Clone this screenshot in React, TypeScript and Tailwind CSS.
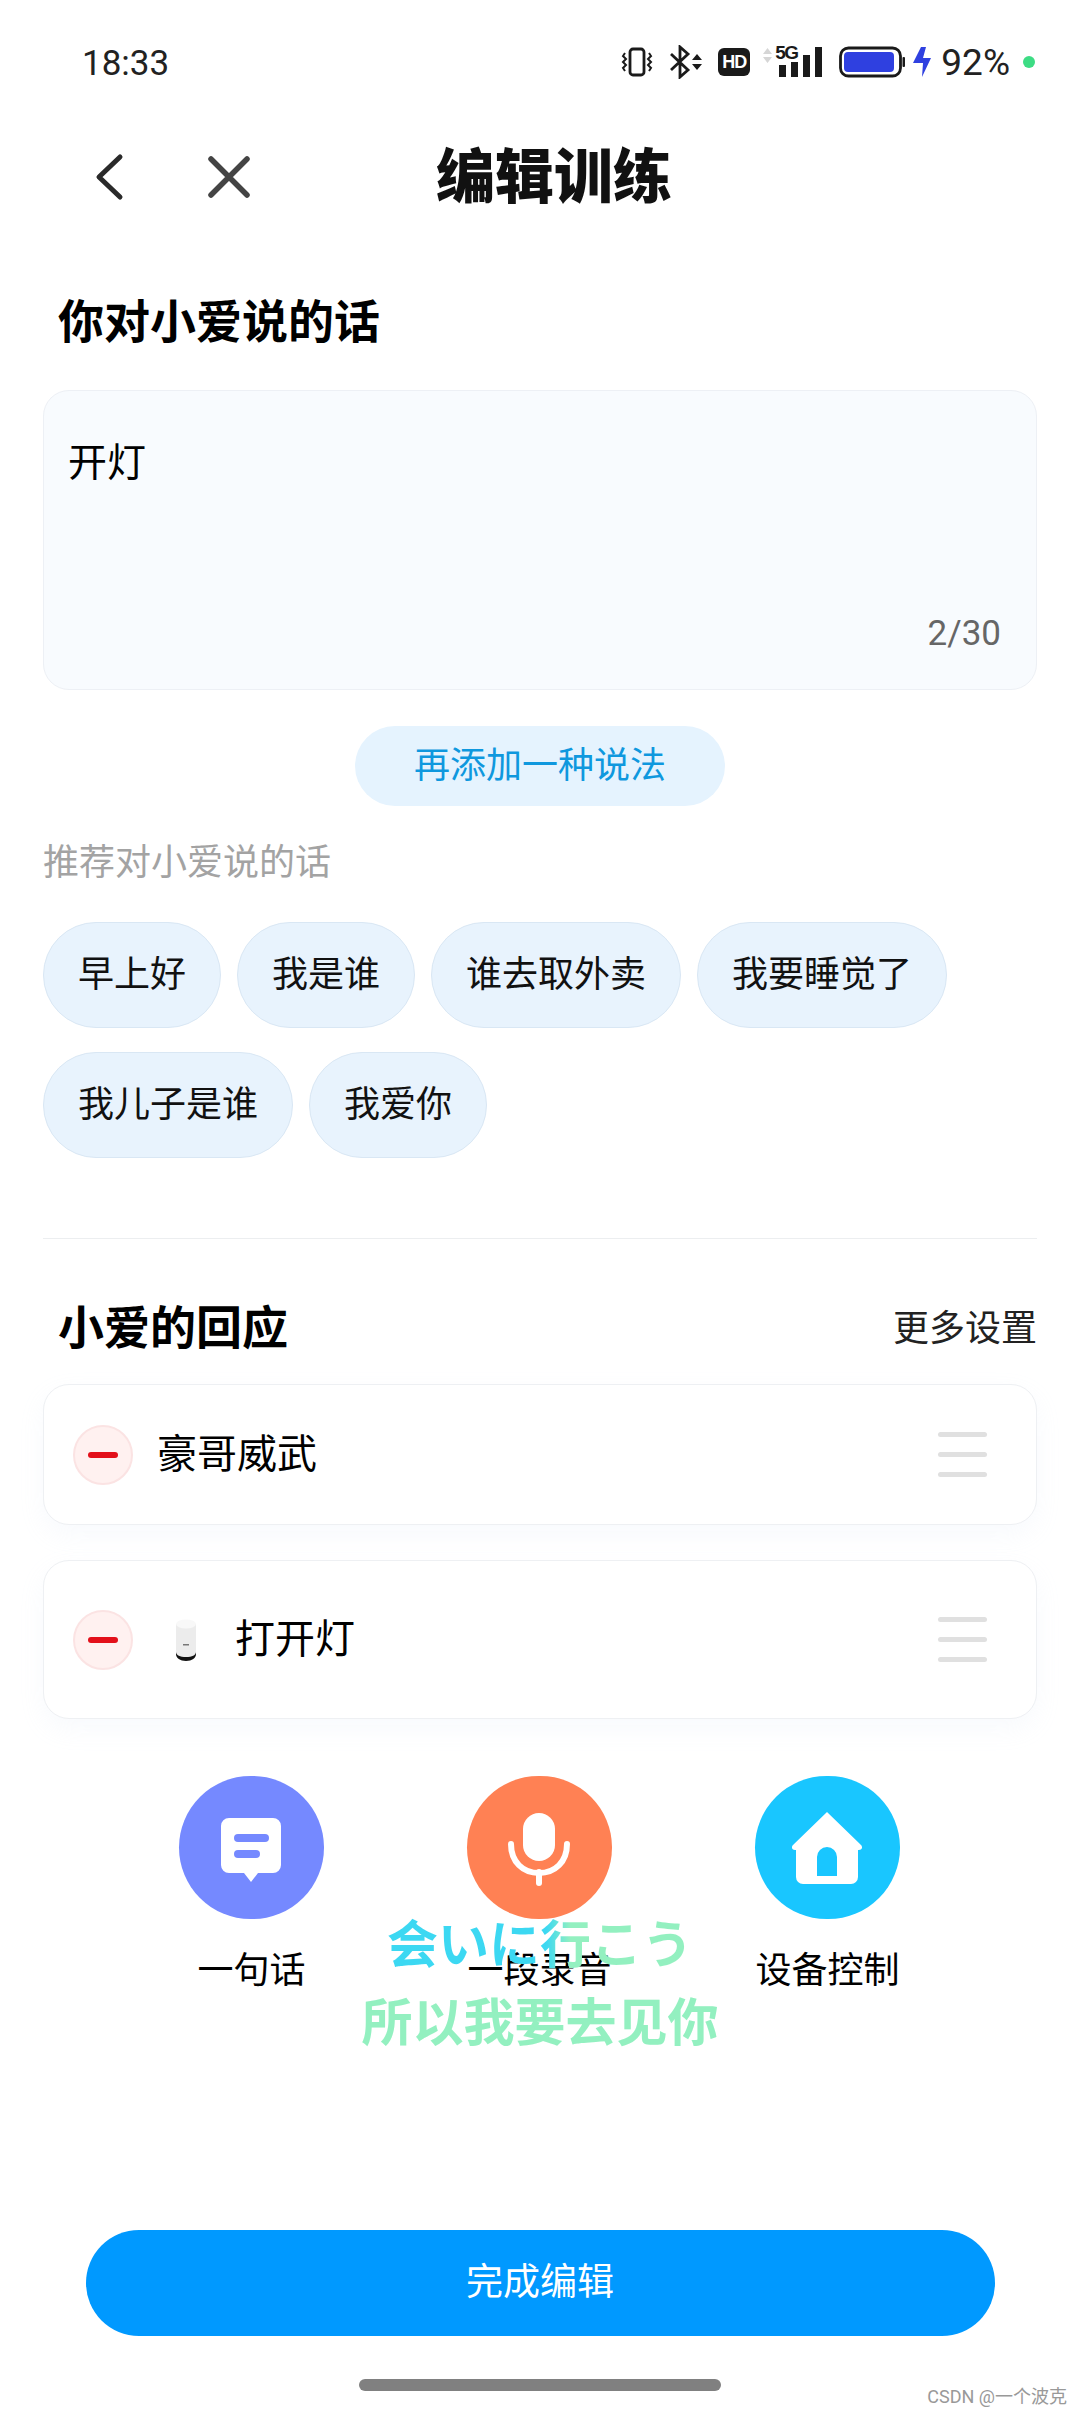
const chips = [
  ['早上好', '我是谁', '谁去取外卖', '我要睡觉了'],
  ['我儿子是谁', '我爱你'],
];

function RemoveButton() {
  return (
    <div className="flex h-[60px] w-[60px] shrink-0 items-center justify-center rounded-full border-2 border-[#fbe3e3] bg-[#fff1f0]">
      <div className="h-[6px] w-[30px] rounded-full bg-[#e3101a]" />
    </div>
  );
}

function DragHandle() {
  return (
    <div className="ml-auto flex w-[49px] flex-col gap-[15px]">
      <div className="h-[5px] rounded-full bg-[#e0e0e0]" />
      <div className="h-[5px] rounded-full bg-[#e0e0e0]" />
      <div className="h-[5px] rounded-full bg-[#e0e0e0]" />
    </div>
  );
}

function SpeakerIcon() {
  return (
    <svg width="22" height="42" viewBox="0 0 22 42" className="ml-[42px] shrink-0">
      <path d="M1 30v5c0 4 4 7 10 7s10-3 10-7v-5z" fill="#111" />
      <path d="M1 5v28c0 3 4 5 10 5s10-2 10-5V5z" fill="#ececec" />
      <ellipse cx="11" cy="5" rx="10" ry="4.5" fill="#f8f8f8" />
      <rect x="8" y="25" width="6" height="1.5" fill="#777" />
    </svg>
  );
}

function ChatIcon() {
  return (
    <svg width="145" height="143" viewBox="0 0 145 143">
      <path d="M50 42h44a8 8 0 0 1 8 8v39a8 8 0 0 1-8 8H79l-7 9-7-9H50a8 8 0 0 1-8-8V50a8 8 0 0 1 8-8z" fill="#fff" />
      <rect x="55" y="58" width="35" height="8" rx="4" fill="#7589ff" />
      <rect x="55" y="74" width="26" height="8" rx="4" fill="#7589ff" />
    </svg>
  );
}

function MicIcon() {
  return (
    <svg width="145" height="143" viewBox="0 0 145 143">
      <rect x="56" y="37" width="32" height="48" rx="16" fill="#fff" />
      <path d="M44 68c0 18 12 29 28 29s28-11 28-29" fill="none" stroke="#fff" strokeWidth="6" strokeLinecap="round" />
      <path d="M72 96v11" stroke="#fff" strokeWidth="6" strokeLinecap="round" />
    </svg>
  );
}

function HomeIcon() {
  return (
    <svg width="145" height="143" viewBox="0 0 145 143">
      <path
        fillRule="evenodd"
        d="M72 36l34 33c2 2 1 5-2 5h-1v27a7 7 0 0 1-7 7H48a7 7 0 0 1-7-7V74h-1c-3 0-4-3-2-5zM62 100h20V81a10 10 0 0 0-20 0z"
        fill="#fff"
      />
    </svg>
  );
}

function StatusIcons() {
  return (
    <div className="flex items-center">
      {/* vibrate */}
      <svg width="32" height="30" viewBox="0 0 32 30" fill="none" stroke="#1a1a1a">
        <rect x="9" y="2" width="14" height="26" rx="3" strokeWidth="2.8" />
        <path d="M4 6l-2 3 3 3-3 3 3 3-3 3 2 3M28 6l2 3-3 3 3 3-3 3 3 3-2 3" strokeWidth="2" />
      </svg>
      {/* bluetooth with data arrows */}
      <svg width="34" height="34" viewBox="0 0 34 34" className="ml-[16px]">
        <path d="M2 9l17 16-8 7V2l8 7L2 25" fill="none" stroke="#1a1a1a" strokeWidth="2.8" />
        <path d="M23 15l5-6 5 6zM23 19h10l-5 6z" fill="#1a1a1a" />
      </svg>
      {/* HD */}
      <div className="ml-[15px] flex h-[28px] w-[32px] items-center justify-center rounded-[6px] bg-[#1a1a1a] text-[18px] leading-none font-bold tracking-[-1px] text-white font-[family-name:'Liberation_Sans',sans-serif]">
        HD
      </div>
      {/* 5G signal */}
      <div className="relative ml-[13px] h-[32px] w-[59px]">
        <svg width="59" height="32" viewBox="0 0 59 32" className="absolute inset-0">
          <path d="M0 8l4.5-6L9 8zM0 11h9l-4.5 6z" fill="#d6d6d6" />
          <rect x="16" y="19" width="7" height="12" fill="#1a1a1a" />
          <rect x="28" y="16" width="7" height="15" fill="#1a1a1a" />
          <rect x="40" y="9" width="7" height="22" fill="#1a1a1a" />
          <rect x="52" y="1" width="7" height="30" fill="#1a1a1a" />
        </svg>
        <span className="absolute top-[-3px] left-[12px] text-[19px] leading-[20px] font-bold tracking-[-1.5px] text-[#1a1a1a] font-[family-name:'Liberation_Sans',sans-serif]">
          5G
        </span>
      </div>
      {/* battery */}
      <svg width="66" height="32" viewBox="0 0 66 32" className="ml-[17px]">
        <rect x="1.5" y="2" width="60" height="28" rx="8" fill="#fff" stroke="#1a1a1a" strokeWidth="2.8" />
        <rect x="5" y="6" width="50" height="20" rx="4" fill="#2f40e0" />
        <rect x="63.5" y="11" width="2.5" height="10" rx="1" fill="#1a1a1a" />
      </svg>
      {/* charging bolt */}
      <svg width="20" height="30" viewBox="0 0 20 30" className="ml-[7px]">
        <path d="M9 0h5l-3 11h8L10 30l1-14H1z" fill="#2f40e0" />
      </svg>
      <span className="ml-[9px] text-[37px] leading-none text-[#222]">92%</span>
      <div className="ml-[13px] h-[12px] w-[12px] rounded-full bg-[#3ddc84]" />
    </div>
  );
}

export default function App() {
  return (
    <div className="relative flex h-[2412px] w-[1080px] flex-col overflow-hidden bg-white text-black font-[family-name:Roboto,'Noto_Sans_CJK_SC',sans-serif]">
      {/* Status bar */}
      <div className="flex h-[124px] shrink-0 items-center justify-between pr-[45px] pl-[82px]">
        <span className="pt-[2px] text-[35px] leading-none text-[#222]">18:33</span>
        <StatusIcons />
      </div>

      {/* Header */}
      <div className="relative flex h-[106px] shrink-0 items-center pl-[93px]">
        <svg width="32" height="48" viewBox="0 0 32 48" fill="none" stroke="#2a2a2a" strokeWidth="5" strokeLinecap="round" strokeLinejoin="round">
          <path d="M27 4L6 24l21 20" />
        </svg>
        <svg width="42" height="42" viewBox="0 0 42 42" fill="none" stroke="#444" strokeWidth="5.5" strokeLinecap="round" className="ml-[83px]">
          <path d="M3 3l36 36M39 3L3 39" />
        </svg>
        <div className="ml-[186px] text-[59px] leading-none font-black text-[#111]">编辑训练</div>
      </div>

      <div className="flex shrink-0 flex-col px-[43px]">
        <div className="mt-[60px] h-[64px] pl-[15px] text-[46px] leading-[64px] font-bold">你对小爱说的话</div>

        {/* Input card */}
        <div className="mt-[36px] flex h-[300px] flex-col rounded-[26px] border border-[#edf0f5] bg-[#f8fbfe] pt-[46px] pr-[35px] pb-[33px] pl-[24px]">
          <div className="text-[39px] leading-[52px]">开灯</div>
          <div className="mt-auto text-right text-[35px] leading-[44px] text-[#666]">2/30</div>
        </div>

        <div className="mt-[36px] flex h-[80px] w-[370px] items-center justify-center self-center rounded-full bg-[#e5f3fe] text-[36px] text-[#0f98de]">
          再添加一种说法
        </div>

        <div className="mt-[32px] h-[50px] text-[36px] leading-[50px] text-[#a3a3a3]">推荐对小爱说的话</div>

        {/* Suggestions */}
        <div className="mt-[34px] flex flex-col gap-[24px]">
          {chips.map((row) => (
            <div key={row[0]} className="flex gap-[16px]">
              {row.map((chip) => (
                <div
                  key={chip}
                  className="flex h-[106px] items-center rounded-[53px] border border-[#d9e7f4] bg-[#e8f3fd] px-[34px] text-[36px] text-[#111]"
                >
                  {chip}
                </div>
              ))}
            </div>
          ))}
        </div>

        <div className="mt-[80px] h-px bg-[#eceef0]" />

        {/* Responses */}
        <div className="mt-[57px] flex h-[64px] items-center justify-between pl-[15px]">
          <span className="text-[46px] font-bold">小爱的回应</span>
          <span className="pt-[2px] text-[36px] text-[#222]">更多设置</span>
        </div>

        <div className="mt-[24px] flex h-[141px] items-center rounded-[26px] border border-[#eef0f3] bg-white pr-[49px] pl-[29px] shadow-[0_10px_24px_rgba(200,215,235,0.12)]">
          <RemoveButton />
          <span className="ml-[24px] text-[40px]">豪哥威武</span>
          <DragHandle />
        </div>

        <div className="mt-[35px] flex h-[159px] items-center rounded-[26px] border border-[#eef0f3] bg-white pr-[49px] pl-[29px] shadow-[0_10px_24px_rgba(200,215,235,0.12)]">
          <RemoveButton />
          <SpeakerIcon />
          <span className="ml-[38px] text-[40px]">打开灯</span>
          <DragHandle />
        </div>
      </div>

      {/* Add actions */}
      <div className="mt-[57px] flex shrink-0 justify-center pr-[1px]">
        <div className="flex w-[288px] flex-col items-center">
          <div className="h-[143px] w-[145px] rounded-full bg-[#7589ff]">
            <ChatIcon />
          </div>
          <span className="mt-[27px] h-[50px] text-[36px] leading-[50px]">一句话</span>
        </div>
        <div className="flex w-[288px] flex-col items-center">
          <div className="h-[143px] w-[145px] rounded-full bg-[#ff8154]">
            <MicIcon />
          </div>
          <span className="mt-[27px] h-[50px] text-[36px] leading-[50px]">一段录音</span>
        </div>
        <div className="flex w-[288px] flex-col items-center">
          <div className="h-[143px] w-[145px] rounded-full bg-[#19c6ff]">
            <HomeIcon />
          </div>
          <span className="mt-[27px] h-[50px] text-[36px] leading-[50px]">设备控制</span>
        </div>
      </div>

      <div className="mx-auto mt-[234px] flex h-[106px] w-[909px] shrink-0 items-center justify-center rounded-full bg-[#0099ff] text-[37px] text-white">
        完成编辑
      </div>

      <div className="mx-auto mt-[43px] h-[12px] w-[362px] shrink-0 rounded-full bg-[#808080]" />

      {/* Lyrics overlay */}
      <div className="absolute top-[1916px] left-0 flex w-full flex-col items-center font-bold">
        <div className="bg-[linear-gradient(90deg,#3cd8f2_0%,#3cd8f2_52%,#93f0c0_60%,#93f0c0_100%)] bg-clip-text text-[51px] leading-[60px] text-transparent">
          会いに行こう
        </div>
        <div className="mt-[18px] text-[51px] leading-[60px] text-[#93f0c0]">所以我要去见你</div>
      </div>

      <div className="absolute right-[13px] bottom-[4px] text-[18px] leading-[22px] text-[#999]">CSDN @一个波克</div>
    </div>
  );
}
